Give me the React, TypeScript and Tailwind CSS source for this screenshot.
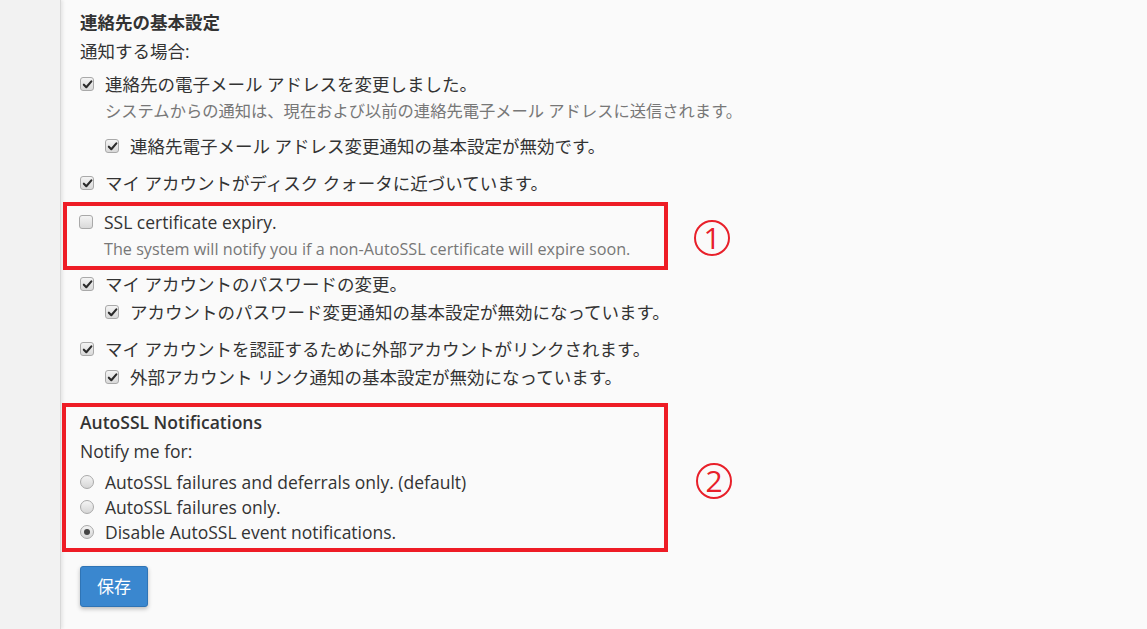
import React from "react";

const font = { fontFamily: '"Open Sans", "Noto Sans CJK JP", sans-serif' };

function Check({ checked = true }: { checked?: boolean }) {
  return (
    <span className="w-[14px] h-[14px] shrink-0 rounded-[3px] border border-[#a9a9a9] bg-gradient-to-b from-[#f4f4f4] to-[#d9d9d9] flex items-center justify-center">
      {checked && (
        <svg viewBox="0 0 12 12" className="w-[11px] h-[11px]">
          <path d="M2 6.2 L4.7 9 L10.2 2.6" fill="none" stroke="#2b2b2b" strokeWidth="2.3" strokeLinecap="round" strokeLinejoin="round" />
        </svg>
      )}
    </span>
  );
}

function Radio({ checked = false }: { checked?: boolean }) {
  return (
    <span className="w-[14px] h-[14px] shrink-0 rounded-full border border-[#a9a9a9] bg-gradient-to-b from-[#f4f4f4] to-[#d6d6d6] flex items-center justify-center">
      {checked && <span className="w-[6px] h-[6px] rounded-full bg-[#444]" />}
    </span>
  );
}

function Row({ children, checked = true, nested = false }: { children: React.ReactNode; checked?: boolean; nested?: boolean }) {
  return (
    <div className={`h-6 flex items-center gap-[11px] ${nested ? "pl-[25px]" : ""}`}>
      <Check checked={checked} />
      <span className="text-[17.5px] text-[#333] whitespace-nowrap">{children}</span>
    </div>
  );
}

function Mark({ n }: { n: string }) {
  return (
    <div className="w-[36px] h-[36px] rounded-full border-2 border-[#e8202a] flex items-center justify-center text-[#e8202a] text-[30px] leading-none font-medium">
      {n}
    </div>
  );
}

export default function App() {
  return (
    <div className="flex h-screen bg-[#fafafa] overflow-hidden" style={font}>
      <aside className="w-[61px] shrink-0 bg-[#f2f2f2] border-r border-[#d8d8d8] shadow-[2px_0_3px_rgba(0,0,0,0.08)]" />
      <main className="flex flex-col pl-[19px] pt-[10px]">
        <h2 className="h-6 flex items-center text-[17.5px] font-bold text-[#333]">連絡先の基本設定</h2>
        <p className="h-6 mt-[5px] flex items-center text-[17.5px] text-[#333]">通知する場合:</p>

        <div className="mt-[9px]">
          <Row>連絡先の電子メール アドレスを変更しました。</Row>
        </div>
        <p className="h-6 mt-[3px] pl-[25px] flex items-center text-[16.3px] text-[#777] whitespace-nowrap">
          システムからの通知は、現在および以前の連絡先電子メール アドレスに送信されます。
        </p>
        <div className="mt-[11px]">
          <Row nested>連絡先電子メール アドレス変更通知の基本設定が無効です。</Row>
        </div>
        <div className="mt-[13px]">
          <Row>マイ アカウントがディスク クォータに近づいています。</Row>
        </div>

        <div className="flex items-center mt-[7px] -ml-[17px]">
          <div className="w-[605px] border-4 border-[#ee1c25] pl-[12px] pt-[4px] pb-[5px]">
            <Row checked={false}>SSL certificate expiry.</Row>
            <p className="h-6 mt-[3px] pl-[25px] flex items-center text-[16.2px] text-[#777] whitespace-nowrap">
              The system will notify you if a non-AutoSSL certificate will expire soon.
            </p>
          </div>
          <div className="ml-[26px] mt-[4px]">
            <Mark n="1" />
          </div>
        </div>

        <div className="mt-[2px]">
          <Row>マイ アカウントのパスワードの変更。</Row>
        </div>
        <div className="mt-[4px]">
          <Row nested>アカウントのパスワード変更通知の基本設定が無効になっています。</Row>
        </div>
        <div className="mt-[13px]">
          <Row>マイ アカウントを認証するために外部アカウントがリンクされます。</Row>
        </div>
        <div className="mt-[4px]">
          <Row nested>外部アカウント リンク通知の基本設定が無効になっています。</Row>
        </div>

        <div className="flex items-center mt-[14px] -ml-[18px]">
          <div className="w-[606px] border-4 border-[#ee1c25] pl-[14px] pt-[3px] pb-[4px]">
            <h3 className="h-6 flex items-center text-[17.5px] font-semibold text-[#333]">AutoSSL Notifications</h3>
            <p className="h-6 mt-[5px] flex items-center text-[17.5px] text-[#333]">Notify me for:</p>
            <div className="mt-[7px] flex flex-col gap-[1px]">
              {[
                ["AutoSSL failures and deferrals only. (default)", false],
                ["AutoSSL failures only.", false],
                ["Disable AutoSSL event notifications.", true],
              ].map(([label, on]) => (
                <div key={label as string} className="h-6 flex items-center gap-[11px]">
                  <Radio checked={on as boolean} />
                  <span className="text-[17.5px] text-[#333] whitespace-nowrap">{label}</span>
                </div>
              ))}
            </div>
          </div>
          <div className="ml-[28px] mt-[6px]">
            <Mark n="2" />
          </div>
        </div>

        <div className="mt-[14px]">
          <button className="w-[68px] h-[41px] rounded-[3px] bg-[#3a87cf] border border-[#2f74b5] text-white text-[17px] shadow-[0_2px_4px_rgba(0,0,0,0.25)]">
            保存
          </button>
        </div>
      </main>
    </div>
  );
}
